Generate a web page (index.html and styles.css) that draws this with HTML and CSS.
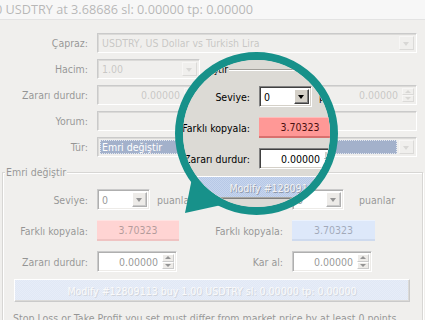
FILE: index.html
```html
<!DOCTYPE html>
<html lang="tr">
<head>
    <meta charset="UTF-8">
    <title>Emri değiştir</title>
    <link rel="stylesheet" href="styles.css">
</head>
<body>
<div class="stage">
    <!-- soluk pencere -->
    <div class="window">
        <div class="titlebar"><span class="title">0 USDTRY at 3.68686 sl: 0.00000 tp: 0.00000</span></div>
        <div class="form">
            <span class="lbl">Çapraz:</span>
            <div class="field off"><span class="val">USDTRY, US Dollar vs Turkish Lira</span><span class="drop"></span></div>
            <span class="lbl">Hacim:</span>
            <div class="line"><div class="field off w-vol"><span class="val">1.00</span><span class="drop"></span></div></div>
            <span class="lbl">Zararı durdur:</span>
            <div class="line">
                <div class="field off num w-sl"><span class="val">0.00000</span><span class="spin"><i></i><i></i></span></div>
                <span class="lbl2">Kar al:</span>
                <div class="field off num w-tp"><span class="val">0.00000</span><span class="spin"><i></i><i></i></span></div>
            </div>
            <span class="lbl">Yorum:</span>
            <div class="field off"></div>
            <span class="lbl">Tür:</span>
            <div class="field off"><span class="pick">Emri değiştir</span><span class="drop"></span></div>
        </div>
        <div class="group">
            <span class="legend">Emri değiştir</span>
            <div class="grid">
                <span class="lbl">Seviye:</span>
                <div class="line"><div class="field w-lvl"><span class="val">0</span><span class="drop"></span></div><span class="unit">puanlar</span></div>
                <span class="lbl">Seviye:</span>
                <div class="line"><div class="field w-lvl2"><span class="val">0</span><span class="drop"></span></div><span class="unit unit-r">puanlar</span></div>
                <span class="lbl">Farklı kopyala:</span>
                <div class="line"><div class="price red">3.70323</div></div>
                <span class="lbl">Farklı kopyala:</span>
                <div class="line"><div class="price blue">3.70323</div></div>
                <span class="lbl">Zararı durdur:</span>
                <div class="line"><div class="field num w-sl2"><span class="val">0.00000</span><span class="spin"><i></i><i></i></span></div></div>
                <span class="lbl">Kar al:</span>
                <div class="line"><div class="field num w-sl2"><span class="val">0.00000</span><span class="spin"><i></i><i></i></span></div></div>
            </div>
            <button class="modify">Modify #12809113 buy 1.00 USDTRY sl: 0.00000 tp: 0.00000</button>
            <p class="note">Stop Loss or Take Profit you set must differ from market price by at least 0 points</p>
        </div>
    </div>
    <div class="fade"></div>

    <!-- büyüteç -->
    <svg class="tail" width="425" height="320"><polygon points="185,213 192,178 226,204"/></svg>
    <div class="lens">
        <div class="window">
            <div class="titlebar"><span class="title">0 USDTRY at 3.68686 sl: 0.00000 tp: 0.00000</span></div>
            <div class="form">
                <span class="lbl">Çapraz:</span>
                <div class="field off"><span class="val">USDTRY, US Dollar vs Turkish Lira</span><span class="drop"></span></div>
                <span class="lbl">Hacim:</span>
                <div class="line"><div class="field off w-vol"><span class="val">1.00</span><span class="drop"></span></div></div>
                <span class="lbl">Zararı durdur:</span>
                <div class="line">
                    <div class="field off num w-sl"><span class="val">0.00000</span><span class="spin"><i></i><i></i></span></div>
                    <span class="lbl2">Kar al:</span>
                    <div class="field off num w-tp"><span class="val">0.00000</span><span class="spin"><i></i><i></i></span></div>
                </div>
                <span class="lbl">Yorum:</span>
                <div class="field off"></div>
                <span class="lbl">Tür:</span>
                <div class="field off"><span class="pick">Emri değiştir</span><span class="drop"></span></div>
            </div>
            <div class="group">
                <span class="legend">Emri değiştir</span>
                <div class="grid">
                    <span class="lbl">Seviye:</span>
                    <div class="line"><div class="field w-lvl"><span class="val">0</span><span class="drop"></span></div><span class="unit">puanlar</span></div>
                    <span class="lbl">Seviye:</span>
                    <div class="line"><div class="field w-lvl2"><span class="val">0</span><span class="drop"></span></div><span class="unit unit-r">puanlar</span></div>
                    <span class="lbl">Farklı kopyala:</span>
                    <div class="line"><div class="price red">3.70323</div></div>
                    <span class="lbl">Farklı kopyala:</span>
                    <div class="line"><div class="price blue">3.70323</div></div>
                    <span class="lbl">Zararı durdur:</span>
                    <div class="line"><div class="field num w-sl2"><span class="val">0.00000</span><span class="spin"><i></i><i></i></span></div></div>
                    <span class="lbl">Kar al:</span>
                    <div class="line"><div class="field num w-sl2"><span class="val">0.00000</span><span class="spin"><i></i><i></i></span></div></div>
                </div>
                <button class="modify">Modify #12809113 buy 1.00 USDTRY sl: 0.00000 tp: 0.00000</button>
                <p class="note">Stop Loss or Take Profit you set must differ from market price by at least 0 points</p>
            </div>
        </div>
    </div>
</div>
</body>
</html>
```

FILE: styles.css
```css
* {
    margin: 0;
    padding: 0;
    box-sizing: border-box;
}

body {
    background: #f0efec;
    overflow: hidden;
}

.stage {
    position: relative;
    width: 425px;
    height: 320px;
    overflow: hidden;
}

/* pencere */
.window {
    width: 425px;
    height: 320px;
    overflow: hidden;
    background: #dcdad5;
    font-family: "DejaVu Sans Condensed", "Liberation Sans", Arial, sans-serif;
    font-size: 10.5px;
    color: #000;
}

.titlebar {
    height: 20px;
    background: #ececec;
    border-bottom: 1px solid #bcbcbc;
    white-space: nowrap;
    overflow: hidden;
}

.title {
    display: block;
    margin-left: -5px;
    font-family: "Open Sans", sans-serif;
    font-size: 12.7px;
    line-height: 19px;
    color: #545454;
}

/* üst form */
.form {
    display: grid;
    grid-template-columns: 97px 1fr;
    grid-auto-rows: 20px;
    row-gap: 6px;
    padding: 13px 8px 0 0;
}

.lbl {
    text-align: right;
    padding-right: 9px;
    align-self: center;
    white-space: nowrap;
}

.lbl2 {
    margin-left: auto;
    margin-right: 9px;
    white-space: nowrap;
}

.line {
    display: flex;
    align-items: center;
}

.field {
    display: flex;
    align-items: center;
    height: 20px;
    padding: 2px;
    background: #fff;
    border: 1px solid;
    border-color: #808080 #fff #fff #808080;
    box-shadow: inset 1px 1px #404040, inset -1px -1px #d4d0c8;
    white-space: nowrap;
    overflow: hidden;
}

.field.off {
    background: #dcdad5;
    color: #7c7a76;
    box-shadow: inset 1px 1px #a9a7a2;
}

.val {
    padding: 0 2px;
    flex: 1;
}

.num .val {
    text-align: right;
    padding-right: 4px;
}

.w-vol { width: 103px; }
.w-sl { width: 102px; }
.w-tp { width: 100px; }
.w-lvl { width: 53px; height: 21px; }
.w-lvl2 { width: 52px; height: 21px; }
.w-sl2 { width: 80px; height: 21px; }

/* açılır ok */
.drop {
    position: relative;
    width: 15px;
    height: 100%;
    flex: none;
    background: #d4d0c8;
    border: 1px solid;
    border-color: #fff #404040 #404040 #fff;
    box-shadow: inset -1px -1px #808080;
}

.drop::after {
    content: "";
    position: absolute;
    left: 3px;
    top: 5px;
    border: 3.5px solid transparent;
    border-top: 4px solid #000;
}

.off .drop {
    background: #dcdad5;
    border-color: #eceae6 #a9a7a2 #a9a7a2 #eceae6;
    box-shadow: none;
}

.off .drop::after {
    border-top-color: #a3a19c;
}

/* sayı kutusu okları */
.spin {
    display: flex;
    flex-direction: column;
    width: 12px;
    height: 100%;
    flex: none;
}

.spin i {
    position: relative;
    flex: 1;
    background: #d4d0c8;
    border: 1px solid;
    border-color: #fff #808080 #808080 #fff;
}

.spin i::after {
    content: "";
    position: absolute;
    left: 2px;
    top: 1px;
    border: 3px solid transparent;
    border-bottom: 3px solid #000;
    border-top: 0;
}

.spin i + i::after {
    border-bottom: 0;
    border-top: 3px solid #000;
}

.off .spin i {
    background: #dcdad5;
    border-color: #eceae6 #a9a7a2 #a9a7a2 #eceae6;
}

.off .spin i::after { border-bottom-color: #a3a19c; }
.off .spin i + i::after { border-top-color: #a3a19c; }

/* seçili tür */
.pick {
    position: relative;
    z-index: 2;
    flex: 1;
    align-self: stretch;
    margin-right: 2px;
    padding: 0 2px;
    line-height: 14px;
    background: #a3b1cb;
    color: #fff;
    outline: 1px dotted #e4e8f0;
    outline-offset: -1px;
}

/* grup kutusu */
.group {
    position: relative;
    margin: 15px 2px 0 2px;
    padding: 16px 0 20px;
    border: 1px solid #a09e99;
    box-shadow: inset 1px 1px #fff, 1px 1px #fff;
}

.legend {
    position: absolute;
    top: -7px;
    left: 2px;
    padding: 0 1px;
    line-height: 13px;
    background: #dcdad5;
}

.grid {
    display: grid;
    grid-template-columns: 94px 108px 87px 1fr;
    grid-auto-rows: 21px;
    row-gap: 10px;
}

.unit {
    margin-left: 7px;
}

.unit-r {
    margin-left: 15px;
}

.price {
    width: 82px;
    height: 21px;
    line-height: 19px;
    text-align: center;
}

.price.red {
    background: #ff9896;
    color: #4a1010;
    border-top: 1px solid #ffbcbb;
    border-bottom: 2px solid #d9706e;
}

.price.blue {
    width: 83px;
    background: #aec8f3;
    color: #22345a;
    border-top: 1px solid #d0e0fa;
    border-bottom: 2px solid #8aa6d6;
}

/* buton */
.modify {
    display: block;
    width: 396px;
    height: 23px;
    margin: 7px 0 0 11px;
    font: inherit;
    color: #f2f2f2;
    text-shadow: 1px 1px 0 #8f99ab;
    background: repeating-conic-gradient(#c6d5ee 0 25%, #b7c8e6 0 50%) 0 0 / 2px 2px;
    border: 1px solid;
    border-color: #fff #808080 #808080 #fff;
    box-shadow: inset -1px -1px #a9a7a2;
}

.note {
    margin-top: 10px;
    padding-left: 10px;
    white-space: nowrap;
}

/* soluklaştırma katmanı */
.fade {
    position: absolute;
    top: 0;
    left: 0;
    width: 100%;
    height: 100%;
    background: rgba(255, 255, 255, 0.58);
    z-index: 1;
}

/* büyüteç */
.tail {
    position: absolute;
    top: 0;
    left: 0;
    z-index: 3;
    fill: #17918a;
}

.lens {
    position: absolute;
    left: 175px;
    top: 52px;
    width: 163px;
    height: 163px;
    border: 8px solid #17918a;
    border-radius: 50%;
    overflow: hidden;
    background: #dcdad5;
    z-index: 3;
}

.lens .window {
    position: absolute;
    left: -21px;
    top: -163px;
}
```
